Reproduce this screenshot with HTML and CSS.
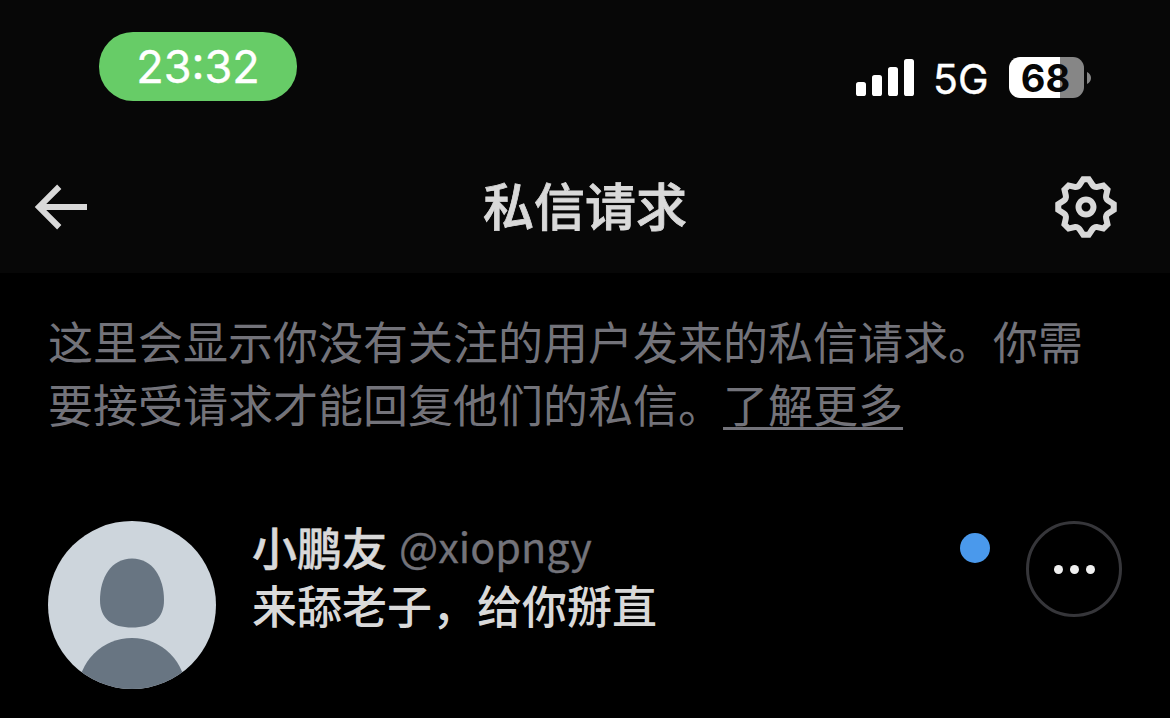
FILE: index.html
```html
<!DOCTYPE html>
<html lang="zh-CN">
<head>
  <meta charset="UTF-8" />
  <meta name="viewport" content="width=device-width, initial-scale=1.0"/>
  <title>私信请求</title>
  <link rel="stylesheet" href="styles.css">
</head>
<body>

  <header class="header">
    <!-- Status bar -->
    <div class="status-bar">
      <div class="time">23:32</div>
      <div class="status-right">
        <svg class="signal" viewBox="0 0 58 37">
          <rect x="0" y="23" width="10" height="14" rx="2.6"/>
          <rect x="16" y="16" width="10" height="21" rx="2.6"/>
          <rect x="32" y="8" width="10" height="29" rx="2.6"/>
          <rect x="48" y="0" width="10" height="37" rx="2.6"/>
        </svg>
        <span class="network">5G</span>
        <div class="battery">68</div>
        <svg class="battery-tip" viewBox="0 0 4 12"><path d="M0 0c2.4 1 4 3.400 4 6s-1.600 5-4 6z"/></svg>
      </div>
    </div>

    <!-- Title bar -->
    <div class="nav">
      <svg class="icon" viewBox="0 0 24 24"><path d="M7.414 13l5.043 5.040-1.414 1.420L3.586 12l7.457-7.460 1.414 1.420L7.414 11H21v2H7.414z"/></svg>
      <h1>私信请求</h1>
      <svg class="icon" viewBox="0 0 24 24"><path d="M10.540 1.750h2.920l1.570 2.360c.11.17.32.25.53.21l2.530-.59 2.170 2.170-.58 2.540c-.05.2.04.41.21.53l2.360 1.570v2.920l-2.360 1.570c-.17.12-.26.33-.21.53l.58 2.540-2.170 2.170-2.530-.59c-.21-.04-.42.04-.53.21l-1.570 2.360h-2.920l-1.580-2.360c-.11-.17-.32-.25-.52-.21l-2.540.59-2.170-2.170.58-2.540c.05-.2-.03-.41-.21-.53l-2.350-1.570v-2.920L4.100 8.970c.18-.12.26-.33.21-.53L3.730 5.900 5.900 3.730l2.540.59c.2.04.41-.04.52-.21l1.580-2.360zm1.070 2l-.98 1.470C10.050 6.080 9 6.500 7.990 6.270l-1.460-.34-.6.6.33 1.460c.24 1.010-.18 2.070-1.050 2.640l-1.460.98v.78l1.460.98c.87.57 1.290 1.630 1.050 2.640l-.33 1.460.6.6 1.460-.34c1.010-.23 2.060.19 2.640 1.050l.98 1.470h.78l.97-1.470c.58-.86 1.630-1.280 2.650-1.050l1.450.34.61-.6-.34-1.460c-.23-1.010.18-2.070 1.050-2.640l1.470-.98v-.78l-1.470-.98c-.87-.57-1.280-1.630-1.050-2.640l.34-1.460-.61-.6-1.450.34c-1.020.23-2.070-.19-2.650-1.050l-.97-1.470h-.78zM12 10.500c-.83 0-1.500.67-1.500 1.500s.67 1.500 1.500 1.500c.83 0 1.500-.67 1.500-1.500s-.67-1.500-1.500-1.500zM8.500 12c0-1.930 1.560-3.500 3.500-3.500 1.930 0 3.500 1.570 3.500 3.500s-1.570 3.500-3.500 3.500c-1.940 0-3.500-1.570-3.500-3.500z"/></svg>
    </div>
  </header>

  <p class="notice">这里会显示你没有关注的用户发来的私信请求。你需要接受请求才能回复他们的私信。<a href="#">了解更多</a></p>

  <!-- Request -->
  <div class="request">
    <svg class="avatar" viewBox="0 0 168 168">
      <rect width="168" height="168" fill="#cdd5dc"/>
      <path fill="#687582" d="M84 37.500C63 37.500 52 57 52 79C52 98 64 106.500 84 106.500S116 98 116 79C116 57 105 37.500 84 37.500z"/>
      <circle cx="84" cy="171" r="54" fill="#687582"/>
    </svg>
    <div class="content">
      <div class="name">小鹏友<span class="handle">@xiopngy</span></div>
      <div class="message">来舔老子，给你掰直</div>
    </div>
    <div class="unread"></div>
    <button class="more">
      <span></span><span></span><span></span>
    </button>
  </div>

</body>
</html>
```

FILE: styles.css
```css
* { box-sizing: border-box; margin: 0; padding: 0; }
body {
  background-color: #000;
  color: #d9d9d9;
  font-family: "Noto Sans CJK SC", sans-serif;
  overflow: hidden;
}
.header {
  height: 273px;
  background-color: #070707;
}
.status-bar {
  display: flex;
  justify-content: space-between;
  align-items: flex-start;
  height: 171px;
  padding: 32px 79px 0 99px;
  font-family: Inter, sans-serif;
  color: #fff;
}
.time {
  width: 198px;
  height: 69px;
  border-radius: 34px;
  background-color: #67cc67;
  font-size: 45px;
  font-weight: 400;
  line-height: 69px;
  text-align: center;
  -webkit-text-stroke: 0.4px #fff;
}
.status-right {
  display: flex;
  align-items: center;
  height: 41px;
  margin-top: 25px;
}
.signal {
  width: 58px;
  height: 37px;
  fill: #fff;
}
.network {
  width: 56px;
  margin: 3px 20px 0 19px;
  font-size: 41px;
  font-weight: 400;
  line-height: 41px;
  -webkit-text-stroke: 0.4px #fff;
}
.battery {
  width: 75px;
  height: 41px;
  padding-right: 2px;
  border-radius: 11px;
  background: linear-gradient(to right, #fff 51px, #868686 51px);
  color: #070707;
  font-size: 38px;
  font-weight: 700;
  line-height: 42px;
  text-align: center;
}
.battery-tip {
  width: 4px;
  height: 12px;
  margin-left: 3px;
  fill: #868686;
}
.nav {
  display: flex;
  justify-content: space-between;
  align-items: center;
  height: 72px;
  padding: 0 48px 0 24px;
}
.icon {
  width: 72px;
  height: 72px;
  fill: #d9d9d9;
}
h1 {
  margin: -6px 0 0 24px;
  font-size: 51px;
  font-weight: 500;
  line-height: 72px;
  -webkit-text-stroke: 0.8px #d9d9d9;
}
.notice {
  padding: 36px 48px 0;
  font-size: 45px;
  line-height: 63px;
  color: #73737a;
}
.notice a {
  color: inherit;
  text-decoration: underline;
  text-decoration-thickness: 3px;
  text-decoration-skip-ink: none;
  text-underline-offset: 4px;
}
.request {
  display: flex;
  align-items: flex-start;
  margin-top: 86px;
  padding: 0 48px;
}
.avatar {
  width: 168px;
  height: 168px;
  border-radius: 50%;
}
.content {
  flex: 1;
  margin: -3px 0 0 36px;
  font-size: 45px;
  font-weight: 500;
  line-height: 58px;
}
.name {
  height: 58px;
  -webkit-text-stroke: 0.5px #d9d9d9;
}
.handle {
  margin-left: 12px;
  font-size: 41.4px;
  font-weight: 400;
  line-height: 1;
  vertical-align: 3px;
  color: #73737a;
  -webkit-text-stroke: 0.3px #73737a;
}
.unread {
  width: 30px;
  height: 30px;
  margin: 12px 36px 0 0;
  border-radius: 50%;
  background-color: #4a99ec;
}
.more {
  display: flex;
  justify-content: center;
  align-items: center;
  gap: 7px;
  width: 96px;
  height: 96px;
  border: 3px solid #36363a;
  border-radius: 50%;
  background: none;
}
.more span {
  width: 9px;
  height: 9px;
  border-radius: 50%;
  background-color: #f0f0f0;
}
```
